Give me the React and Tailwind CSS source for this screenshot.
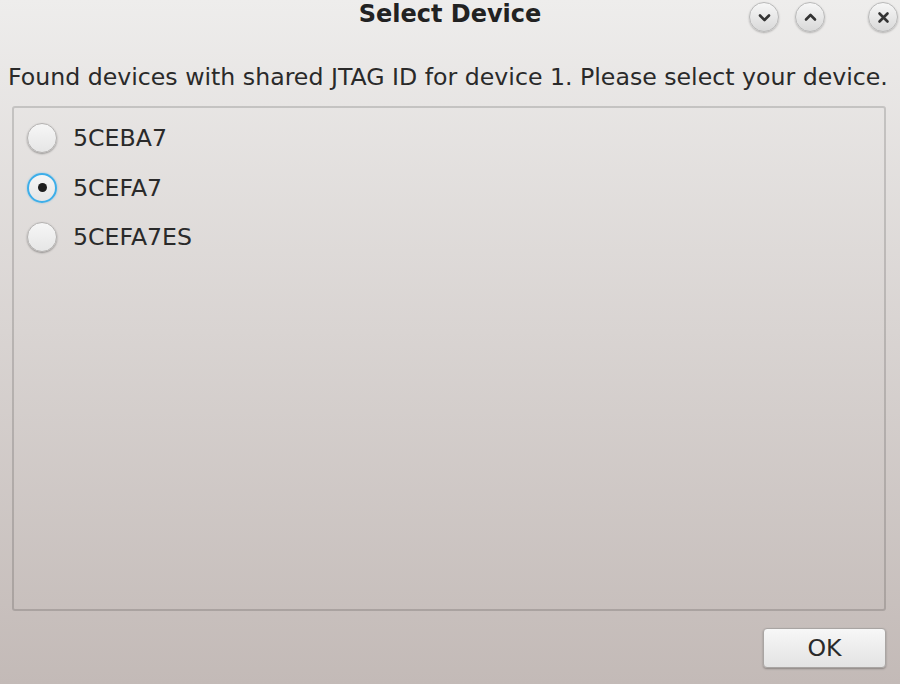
const FONT = { fontFamily: '"DejaVu Sans", "Liberation Sans", sans-serif' }

const devices = ['5CEBA7', '5CEFA7', '5CEFA7ES']

function TitleButton({ children }) {
    return (
        <div className="w-[30px] h-[30px] rounded-full border border-[#b9b9b9] bg-gradient-to-b from-[#f7f7f7] to-[#d9d9d9] shadow-[0_1px_2px_rgba(0,0,0,0.25)] flex items-center justify-center">
            {children}
        </div>
    )
}

function Radio({ checked }) {
    return (
        <div
            className={
                'w-[30px] h-[30px] rounded-full flex items-center justify-center bg-gradient-to-b from-[#f6f6f6] to-[#e6e6e6] ' +
                (checked
                    ? 'border-2 border-[#3daee9] shadow-[0_0_2px_rgba(61,174,233,0.6)]'
                    : 'border border-[#b4b2b1] shadow-[0_1px_2px_rgba(0,0,0,0.35)]')
            }
        >
            {checked && <div className="w-[9px] h-[9px] rounded-full bg-[#1e1e1e]" />}
        </div>
    )
}

export default function App() {
    return (
        <div
            className="w-[900px] h-[684px] bg-gradient-to-b from-[#eeedec] to-[#c3bab7] flex flex-col text-[#2a2a2a]"
            style={FONT}
        >
            {/* Barre de titre */}
            <div className="h-[36px] grid grid-cols-[1fr_auto_1fr] items-start">
                <div />
                <div className="text-[24px] leading-[28px] font-bold text-[#222]">Select Device</div>
                <div className="flex justify-end gap-[16px] pt-[2px] pr-[2px]">
                    <TitleButton>
                        <svg width="13" height="9" viewBox="0 0 13 9" fill="none" stroke="#333" strokeWidth="2.6" strokeLinecap="round" strokeLinejoin="round">
                            <path d="M2 2.5 L6.5 7 L11 2.5" />
                        </svg>
                    </TitleButton>
                    <TitleButton>
                        <svg width="13" height="9" viewBox="0 0 13 9" fill="none" stroke="#333" strokeWidth="2.6" strokeLinecap="round" strokeLinejoin="round">
                            <path d="M2 6.5 L6.5 2 L11 6.5" />
                        </svg>
                    </TitleButton>
                    <div className="w-[11px]" />
                    <TitleButton>
                        <svg width="13" height="13" viewBox="0 0 13 13" fill="none" stroke="#333" strokeWidth="2.6" strokeLinecap="round">
                            <path d="M2.5 2.5 L10.5 10.5 M10.5 2.5 L2.5 10.5" />
                        </svg>
                    </TitleButton>
                </div>
            </div>

            <p className="mt-[27px] pl-[8px] text-[23.65px] leading-[28px] whitespace-nowrap">
                Found devices with shared JTAG ID for device 1. Please select your device.
            </p>

            {/* Liste des appareils */}
            <div className="mt-[15px] ml-[12px] w-[874px] h-[505px] border-2 border-black/15 rounded-[3px] pt-[15px] pl-[13px] flex flex-col gap-[19.5px]">
                {devices.map((d, i) => (
                    <div key={d} className="flex items-center gap-[16px] h-[30px]">
                        <Radio checked={i === 1} />
                        <span className="text-[23.65px] leading-[28px]">{d}</span>
                    </div>
                ))}
            </div>

            <div className="mt-[17px] flex justify-end pr-[14px]">
                <button className="w-[123px] h-[40px] rounded-[4px] border border-[#a9a5a3] bg-gradient-to-b from-[#f7f7f7] to-[#e3e3e3] shadow-[0_1px_2px_rgba(0,0,0,0.3)] text-[23.65px] leading-[28px] text-[#2a2a2a]">
                    OK
                </button>
            </div>
        </div>
    )
}
